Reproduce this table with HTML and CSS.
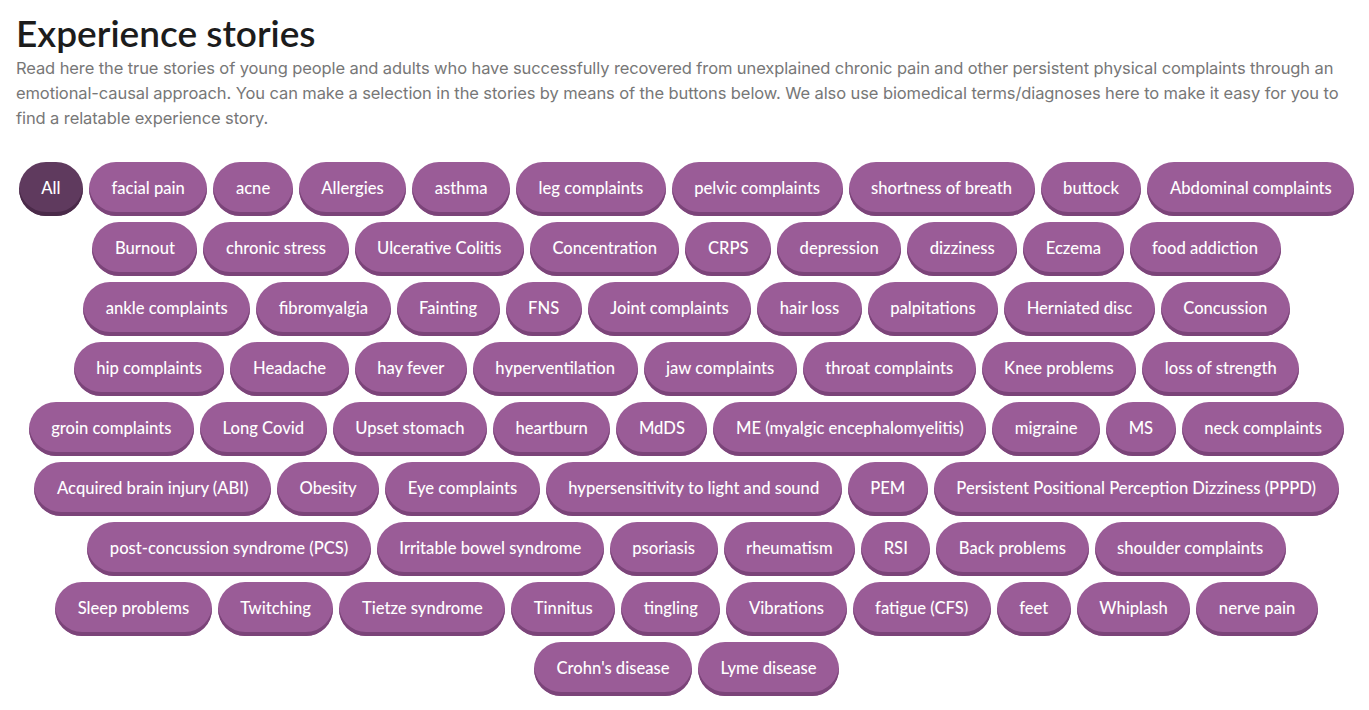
FILE: index.html
```html
<!DOCTYPE html>
<html lang="en">
<head>
<meta charset="utf-8">
<title>Experience stories</title>
<link rel="stylesheet" href="styles.css">
</head>
<body>
<main class="page">
  <h1 class="title">Experience stories</h1>
  <p class="intro">Read here the true stories of young people and adults who have successfully recovered from unexplained chronic pain and other persistent physical complaints through an emotional-causal approach. You can make a selection in the stories by means of the buttons below. We also use biomedical terms/diagnoses here to make it easy for you to find a relatable experience story.</p>
  <div class="filters">
    <div class="row">
      <button class="tag active">All</button>
      <button class="tag">facial pain</button>
      <button class="tag">acne</button>
      <button class="tag">Allergies</button>
      <button class="tag">asthma</button>
      <button class="tag">leg complaints</button>
      <button class="tag">pelvic complaints</button>
      <button class="tag">shortness of breath</button>
      <button class="tag">buttock</button>
      <button class="tag">Abdominal complaints</button>
    </div>
    <div class="row">
      <button class="tag">Burnout</button>
      <button class="tag">chronic stress</button>
      <button class="tag">Ulcerative Colitis</button>
      <button class="tag">Concentration</button>
      <button class="tag">CRPS</button>
      <button class="tag">depression</button>
      <button class="tag">dizziness</button>
      <button class="tag">Eczema</button>
      <button class="tag">food addiction</button>
    </div>
    <div class="row">
      <button class="tag">ankle complaints</button>
      <button class="tag">fibromyalgia</button>
      <button class="tag">Fainting</button>
      <button class="tag">FNS</button>
      <button class="tag">Joint complaints</button>
      <button class="tag">hair loss</button>
      <button class="tag">palpitations</button>
      <button class="tag">Herniated disc</button>
      <button class="tag">Concussion</button>
    </div>
    <div class="row">
      <button class="tag">hip complaints</button>
      <button class="tag">Headache</button>
      <button class="tag">hay fever</button>
      <button class="tag">hyperventilation</button>
      <button class="tag">jaw complaints</button>
      <button class="tag">throat complaints</button>
      <button class="tag">Knee problems</button>
      <button class="tag">loss of strength</button>
    </div>
    <div class="row">
      <button class="tag">groin complaints</button>
      <button class="tag">Long Covid</button>
      <button class="tag">Upset stomach</button>
      <button class="tag">heartburn</button>
      <button class="tag">MdDS</button>
      <button class="tag">ME (myalgic encephalomyelitis)</button>
      <button class="tag">migraine</button>
      <button class="tag">MS</button>
      <button class="tag">neck complaints</button>
    </div>
    <div class="row">
      <button class="tag">Acquired brain injury (ABI)</button>
      <button class="tag">Obesity</button>
      <button class="tag">Eye complaints</button>
      <button class="tag">hypersensitivity to light and sound</button>
      <button class="tag">PEM</button>
      <button class="tag">Persistent Positional Perception Dizziness (PPPD)</button>
    </div>
    <div class="row">
      <button class="tag">post-concussion syndrome (PCS)</button>
      <button class="tag">Irritable bowel syndrome</button>
      <button class="tag">psoriasis</button>
      <button class="tag">rheumatism</button>
      <button class="tag">RSI</button>
      <button class="tag">Back problems</button>
      <button class="tag">shoulder complaints</button>
    </div>
    <div class="row">
      <button class="tag">Sleep problems</button>
      <button class="tag">Twitching</button>
      <button class="tag">Tietze syndrome</button>
      <button class="tag">Tinnitus</button>
      <button class="tag">tingling</button>
      <button class="tag">Vibrations</button>
      <button class="tag">fatigue (CFS)</button>
      <button class="tag">feet</button>
      <button class="tag">Whiplash</button>
      <button class="tag">nerve pain</button>
    </div>
    <div class="row">
      <button class="tag">Crohn's disease</button>
      <button class="tag">Lyme disease</button>
    </div>
  </div>
</main>
</body>
</html>
```

FILE: styles.css
```css
html, body {
  margin: 0;
  padding: 0;
  background: #ffffff;
}

.page {
  padding: 10px 12px 0 16px;
  font-family: "Lato", "Noto Sans", sans-serif;
}

.title {
  margin: 0;
  font-family: "Lato", sans-serif;
  font-size: 37px;
  font-weight: 600;
  line-height: 46px;
  color: #1c1c1c;
  letter-spacing: 0;
}

.intro {
  margin: 0;
  font-family: "Inter", sans-serif;
  font-size: 16.5px;
  line-height: 25px;
  color: #777777;
  letter-spacing: -0.1px;
}

.filters {
  margin-top: 31px;
  display: flex;
  flex-direction: column;
  gap: 6px;
}

.row {
  display: flex;
  justify-content: center;
  gap: 6px;
}

.tag {
  height: 54px;
  padding: 0 22.5px 3px;
  border: none;
  border-radius: 27px;
  background: #9a5c97;
  box-shadow: inset 0 -4px 0 #7b4479;
  color: #ffffff;
  font-family: "Lato", sans-serif;
  font-size: 16.6px;
  font-weight: 500;
  white-space: nowrap;
  cursor: pointer;
}

.tag.active {
  background: #5f3a5e;
  box-shadow: inset 0 -4px 0 #4a2a49;
}
```
